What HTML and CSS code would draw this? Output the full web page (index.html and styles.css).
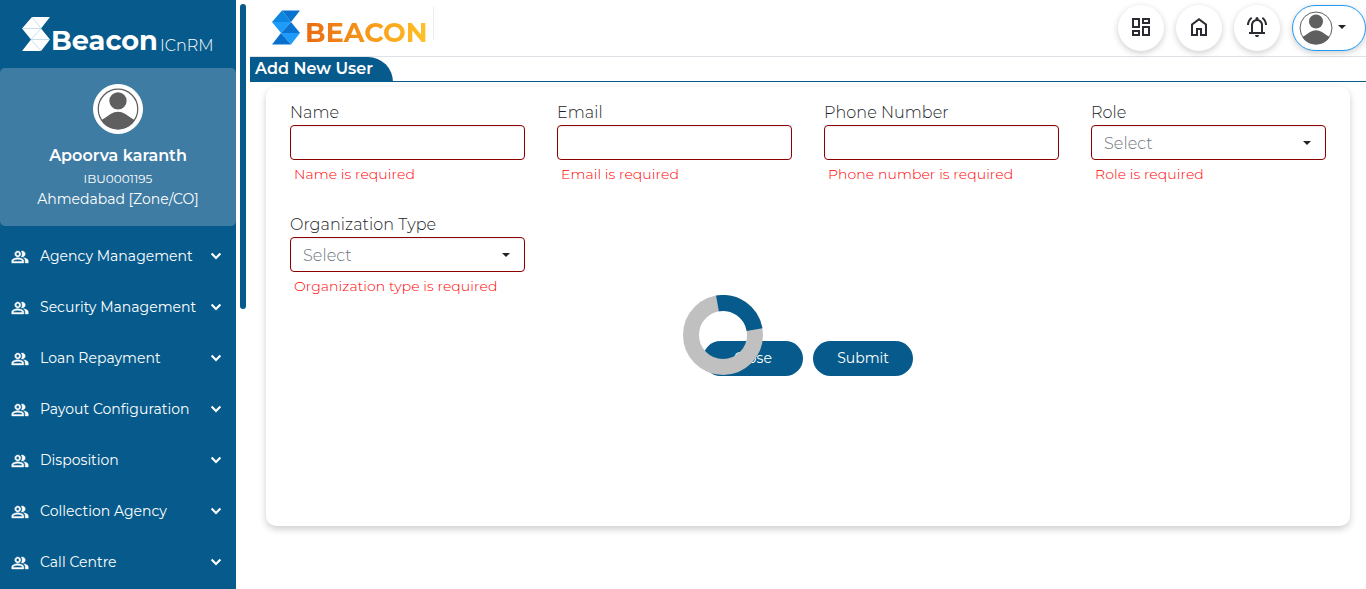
FILE: index.html
```
<!DOCTYPE html>
<html lang="en">
<head>
<meta charset="utf-8">
<title>Beacon - Add New User</title>
<link rel="stylesheet" href="styles.css">
</head>
<body>
<svg class="defs" width="0" height="0">
  <symbol id="people" viewBox="0 0 24 24"><path d="M16.67 13.13C18.04 14.06 19 15.32 19 17v3h4v-3c0-2.18-3.57-3.47-6.33-3.87zM15 12c2.21 0 4-1.79 4-4s-1.79-4-4-4c-.47 0-.91.1-1.33.24C14.5 5.27 15 6.58 15 8s-.5 2.73-1.33 3.76c.42.14.86.24 1.33.24zM9 12c2.21 0 4-1.79 4-4s-1.79-4-4-4-4 1.79-4 4 1.79 4 4 4zm0-6c1.1 0 2 .9 2 2s-.9 2-2 2-2-.9-2-2 .9-2 2-2zm0 7c-2.67 0-8 1.34-8 4v3h16v-3c0-2.66-5.33-4-8-4zm6 5H3v-.99C3.2 16.29 6.3 15 9 15s5.8 1.29 6 2v1z" stroke="currentColor" stroke-width=".5"/></symbol>
  <symbol id="chevron" viewBox="0 0 12 8"><path d="M1.600 1.500 6 5.900l4.400-4.400" fill="none" stroke="currentColor" stroke-width="2.100"/></symbol>
  <symbol id="user" viewBox="0 0 34 34"><clipPath id="face"><circle cx="17" cy="17" r="16.500"/></clipPath><circle cx="17" cy="17" r="16" fill="#fff" stroke="#5f5f5f" stroke-width="1"/><g clip-path="url(#face)" fill="#5f5f5f"><circle cx="17" cy="10.500" r="7"/><path d="M1 27.500Q7 24 11 21Q17 17.500 23 21Q27 24 33 27.500V34H1z"/></g></symbol>
</svg>
<div class="app">
  <aside class="sidebar">
    <div class="brand">
      <svg class="brand-mark" viewBox="0 0 28 35"><path d="M10 0h18l-9 11.500 9 11-9 11.500H0l9-11.500-9-11z" fill="#fff"/><path d="M10 0l9 11.500L9 22.500M0 11.500h19M9 22.500h19M9 22.500l10 11.500" fill="none" stroke="#a9c8dc" stroke-width=".6"/></svg>
      <span class="brand-name">Beacon</span><span class="brand-sub">ICnRM</span>
    </div>
    <section class="profile">
      <div class="portrait"><svg><use href="#user"/></svg></div>
      <strong class="profile-name">Apoorva karanth</strong>
      <span class="profile-id">IBU0001195</span>
      <span class="profile-zone">Ahmedabad [Zone/CO]</span>
    </section>
    <nav class="menu">
      <a class="item"><svg class="people"><use href="#people"/></svg><span class="label">Agency Management</span><svg class="chevron"><use href="#chevron"/></svg></a>
      <a class="item"><svg class="people"><use href="#people"/></svg><span class="label">Security Management</span><svg class="chevron"><use href="#chevron"/></svg></a>
      <a class="item"><svg class="people"><use href="#people"/></svg><span class="label">Loan Repayment</span><svg class="chevron"><use href="#chevron"/></svg></a>
      <a class="item"><svg class="people"><use href="#people"/></svg><span class="label">Payout Configuration</span><svg class="chevron"><use href="#chevron"/></svg></a>
      <a class="item"><svg class="people"><use href="#people"/></svg><span class="label">Disposition</span><svg class="chevron"><use href="#chevron"/></svg></a>
      <a class="item"><svg class="people"><use href="#people"/></svg><span class="label">Collection Agency</span><svg class="chevron"><use href="#chevron"/></svg></a>
      <a class="item"><svg class="people"><use href="#people"/></svg><span class="label">Call Centre</span><svg class="chevron"><use href="#chevron"/></svg></a>
    </nav>
  </aside>
  <div class="scroll"></div>
  <main class="main">
    <header class="header">
      <div class="logo">
        <svg class="logo-mark" viewBox="0 -.6 28 35"><path d="M10 0h18l-9 11.500z" fill="#0872cf"/><path d="M10 0l9 11.500H0z" fill="#0d86df"/><path d="M0 11.500h19L9 22.500z" fill="#1e9cfb"/><path d="M19 11.500l9 11H9z" fill="#0a74d2"/><path d="M9 22.500h19L19 34z" fill="#1e9cfb"/><path d="M9 22.500L19 34H0z" fill="#0870cc"/></svg>
        <span class="logo-name">BEACON</span>
        <span class="logo-rule"></span>
      </div>
      <div class="actions">
        <button class="round"><svg viewBox="0 0 24 24"><path d="M19 5v2h-4V5h4M9 5v6H5V5h4m10 8v6h-4v-6h4M9 17v2H5v-2h4M21 3h-8v6h8V3zM11 3H3v10h8V3zm10 8h-8v10h8V11zm-10 4H3v6h8v-6z"/></svg></button>
        <button class="round"><svg viewBox="0 0 24 24"><path d="M6 19h3v-6h6v6h3v-9l-6-4.500L6 10zm-2 2V9l8-6 8 6v12h-7v-6h-2v6z"/></svg></button>
        <button class="round"><svg viewBox="0 0 24 24"><path d="M4 19v-2h2v-7q0-2.075 1.250-3.687T10.500 4.200v-.7q0-.625.438-1.062T12 2t1.063.438T13.500 3.500v.7q2 .5 3.250 2.113T18 10v7h2v2zm8 3q-.825 0-1.412-.587T10 20h4q0 .825-.587 1.413T12 22m-4-5h8v-7q0-1.650-1.175-2.825T12 6T9.175 7.175T8 10zm-6-7q0-2.500 1.113-4.587T6.100 1.950l1.175 1.600q-1.500 1.100-2.387 2.775T4 10zm18 0q0-2-.888-3.675T16.726 3.550l1.175-1.600q1.875 1.375 2.988 3.463T22 10z"/></svg></button>
        <button class="account"><svg><use href="#user"/></svg><i class="caret"></i></button>
      </div>
    </header>
    <div class="title-row"><h1 class="title">Add New User</h1></div>
    <form class="card">
      <div class="fields">
        <div class="field"><label>Name</label><div class="control"></div><span class="error">Name is required</span></div>
        <div class="field"><label>Email</label><div class="control"></div><span class="error">Email is required</span></div>
        <div class="field"><label>Phone Number</label><div class="control"></div><span class="error">Phone number is required</span></div>
        <div class="field"><label>Role</label><div class="control"><span class="choice">Select</span><i class="caret"></i></div><span class="error">Role is required</span></div>
        <div class="field"><label>Organization Type</label><div class="control"><span class="choice">Select</span><i class="caret"></i></div><span class="error">Organization type is required</span></div>
      </div>
      <div class="buttons">
        <button class="pill" type="button">Close</button>
        <button class="pill" type="button">Submit</button>
        <svg class="spinner" viewBox="0 0 80 80"><circle cx="40" cy="40" r="32" fill="none" stroke="#c0c0c0" stroke-width="16"/><circle cx="40" cy="40" r="32" fill="none" stroke="#075b8c" stroke-width="16" stroke-dasharray="50.270 200" transform="rotate(-100 40 40)"/></svg>
      </div>
    </form>
  </main>
</div>
</body>
</html>
```
FILE: styles.css
```
* { box-sizing: border-box; }
body { margin: 0; background: #fff; font-family: Montserrat, Inter, sans-serif; color: #212529; overflow: hidden; }
svg { display: block; fill: currentColor; }
.defs { position: absolute; }
button { border: 0; padding: 0; font: inherit; color: inherit; }
.app { display: flex; height: 589px; }
.sidebar { width: 236px; background: #075b8c; color: #fff; overflow: hidden; flex: none; }
.brand { height: 68px; display: flex; padding: 17px 0 0 22px; }
.brand-mark { width: 28px; height: 35px; }
.brand-name { font-weight: 700; font-size: 27.200px; line-height: 34px; margin: 7px 0 0 1px; width: 108px; white-space: nowrap; }
.brand-sub { font-weight: 300; font-size: 16px; line-height: 20px; margin: 19px 0 0 1px; }
.profile { height: 158px; background: #3e7ca3; border-radius: 5px; display: flex; flex-direction: column; align-items: center; padding-top: 16px; white-space: nowrap; }
.portrait { width: 50px; height: 50px; border-radius: 50%; background: #fff; padding: 3px; border: 1px solid #fff; }
.portrait svg { width: 42px; height: 42px; }
.profile-name { font-size: 16px; font-weight: 600; line-height: 24px; margin-top: 10px; }
.profile-id { font-size: 12px; line-height: 18px; margin-top: 2px; }
.profile-zone { font-size: 14px; line-height: 21px; margin-top: 1px; }
.menu { padding-top: 4px; }
.item { height: 51px; display: flex; align-items: center; padding: 0 15px 0 11px; font-size: 14px; }
.people { width: 18px; height: 18px; margin: 2px 11px 0 0; }
.label { flex: 1; white-space: nowrap; letter-spacing: .02px; }
.chevron { width: 12px; height: 8px; margin-right: -.5px; }
.scroll { width: 6px; height: 305px; border-radius: 3px; background: #075b8c; margin: 4px 4px 0 4px; flex: none; }
.main { flex: 1; min-width: 0; }
.header { height: 57px; border-bottom: 1px solid #dee2e6; display: flex; justify-content: space-between; align-items: flex-start; }
.logo { display: flex; padding: 10px 0 0 22px; width: 184px; height: 46px; }
.logo-mark { width: 28px; height: 35px; flex: none; }
.logo-name { font-weight: 700; font-size: 27px; line-height: 34px; margin: 6px 0 0 5px; background: linear-gradient(90deg, #ea6a14, #f9a01b 60%, #ffc425); -webkit-background-clip: text; background-clip: text; color: transparent; height: 34px; width: 124px; flex: none; white-space: nowrap; }
.logo-rule { width: 1px; height: 33px; background: #ececec; margin: -3px 0 0 4px; flex: none; }
.actions { display: flex; gap: 12px; padding-top: 5px; }
.round { width: 46px; height: 46px; border-radius: 50%; background: #fff; box-shadow: 0 2px 6px rgba(0,0,0,.2); display: flex; align-items: center; justify-content: center; color: #2b2b33; padding-bottom: 2px; }
.round svg { width: 24px; height: 24px; }
.account { width: 74px; height: 46px; border: 1px solid #1f9bf5; border-radius: 23px; background: #fff; box-shadow: 0 2px 6px rgba(0,0,0,.2); display: flex; align-items: center; padding: 0 0 0 6px; gap: 5px; }
.account svg { width: 34px; height: 34px; }
.account .caret { margin-bottom: 2px; }
.caret { width: 0; height: 0; border: 4px solid transparent; border-top-color: #212529; border-bottom: 0; }
.title-row { height: 25px; border-bottom: 1px solid #075b8c; }
.title { margin: 0; width: 143px; height: 25px; background: #075b8c; color: #fff; font-size: 16px; font-weight: 600; line-height: 24px; padding-left: 5px; border-top-right-radius: 25px; white-space: nowrap; letter-spacing: .03px; }
.card { margin: 5px 16px 0; height: 439px; border-radius: 10px; background: #fff; box-shadow: 0 3px 7px rgba(0,0,0,.2); padding: 14px 24px 0; }
.fields { display: grid; grid-template-columns: repeat(4, 235px); column-gap: 32px; row-gap: 28px; }
.field { height: 84px; display: flex; flex-direction: column; align-items: flex-start; }
.field label { font-size: 16px; font-weight: 300; line-height: 24px; white-space: nowrap; letter-spacing: .06px; }
.control { width: 235px; height: 35px; border: 1px solid #8b0000; border-radius: 4px; box-shadow: inset 0 1px 2px rgba(0,0,0,.08); display: flex; align-items: center; justify-content: space-between; padding: 0 14px 0 12px; color: #6c757d; font-weight: 300; font-size: 16px; }
.choice { padding-top: 2px; letter-spacing: .06px; }
.error { color: #f00; font-size: 14px; font-weight: 300; line-height: 21px; margin: 4px 0 0 4px; white-space: nowrap; letter-spacing: .08px; }
.buttons { position: relative; display: flex; gap: 10px; margin: 44px 0 0 413px; }
.pill { width: 100px; height: 35px; border-radius: 18px; background: #075b8c; color: #fff; font-size: 14px; font-weight: 400; padding-bottom: 1px; }
.spinner { position: absolute; left: -20px; top: -46px; width: 80px; height: 80px; }
```
